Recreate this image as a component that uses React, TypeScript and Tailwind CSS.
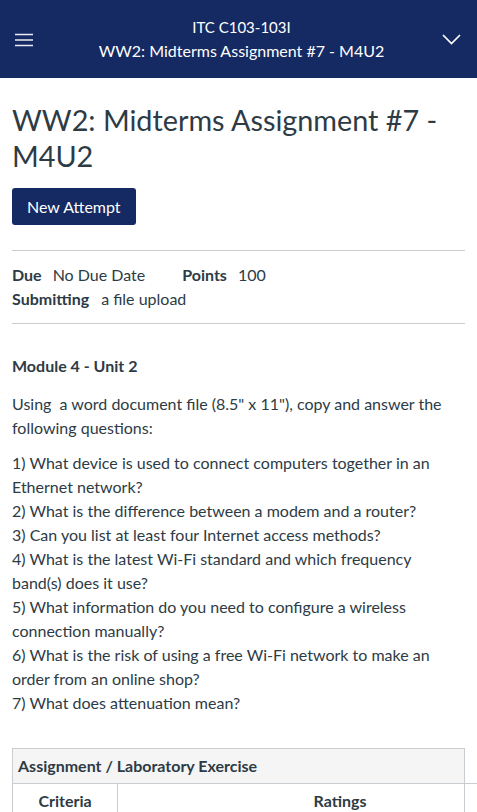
export default function App() {
  const questions = [
    "1) What device is used to connect computers together in an Ethernet network?",
    "2) What is the difference between a modem and a router?",
    "3) Can you list at least four Internet access methods?",
    "4) What is the latest Wi-Fi standard and which frequency band(s) does it use?",
    "5) What information do you need to configure a wireless connection manually?",
    "6) What is the risk of using a free Wi-Fi network to make an order from an online shop?",
    "7) What does attenuation mean?",
  ];

  return (
    <div className="min-h-[812px] overflow-hidden bg-white font-['Lato',sans-serif] text-[#2d3b45]">
      <header className="flex h-[78px] items-center justify-between bg-[#152a62] px-[15px] text-white">
        <svg width="18" height="14" viewBox="0 0 18 14" className="mt-[2px]">
          <path d="M0 1.5h18M0 7h18M0 12.5h18" stroke="#e8ebf2" strokeWidth="1.6" />
        </svg>
        <div className="ml-[8px] flex flex-col items-center leading-[24px]">
          <span className="text-[15px]">ITC C103-103I</span>
          <span className="text-[16px]">WW2: Midterms Assignment #7 - M4U2</span>
        </div>
        <svg width="19" height="11" viewBox="0 0 19 11" className="mr-[1px]">
          <path d="M1 1l8.5 8.5L18 1" fill="none" stroke="white" strokeWidth="1.7" />
        </svg>
      </header>

      <main className="px-3">
        <h1 className="mt-[24px] text-[28.8px] font-normal leading-[36px] text-[#2d3b45]">
          WW2: Midterms Assignment #7 - M4U2
        </h1>
        <button
          type="button"
          className="mt-[14px] h-[37px] rounded-[3px] bg-[#152a62] px-[15px] text-[16px] text-white"
        >
          New Attempt
        </button>

        <div className="mt-[25px] border-t border-[#c7cdd1] py-[12px] text-[16px] leading-[24px]">
          <div className="flex">
            <span className="font-bold">Due</span>
            <span className="ml-[11px]">No Due Date</span>
            <span className="ml-[37px] font-bold">Points</span>
            <span className="ml-[11px]">100</span>
          </div>
          <div className="flex">
            <span className="font-bold">Submitting</span>
            <span className="ml-[12px]">a file upload</span>
          </div>
        </div>

        <div className="border-t border-[#c7cdd1] pt-[30px] text-[16px] leading-[24px]">
          <p className="font-bold">Module 4 - Unit 2</p>
          <div className="w-[440px]">
            <p className="mt-[14px]">
              Using&nbsp; a word document file (8.5" x 11"), copy and answer the following questions:
            </p>
            <div className="mt-[11px]">
              {questions.map((q) => (
                <p key={q}>{q}</p>
              ))}
            </div>
          </div>

          <div className="mt-[33px] w-[453px] border border-[#c7cdd1]">
            <div className="flex h-[34px] items-center bg-[#f5f5f5] px-[5px] font-bold">
              Assignment / Laboratory Exercise
            </div>
            <div className="-mr-[98px] flex border-t border-[#c7cdd1] font-bold">
              <div className="flex h-[34px] w-[105px] items-center justify-center border-r border-[#c7cdd1]">
                Criteria
              </div>
              <div className="flex h-[34px] flex-1 items-center justify-center">Ratings</div>
            </div>
          </div>
        </div>
      </main>
    </div>
  );
}
